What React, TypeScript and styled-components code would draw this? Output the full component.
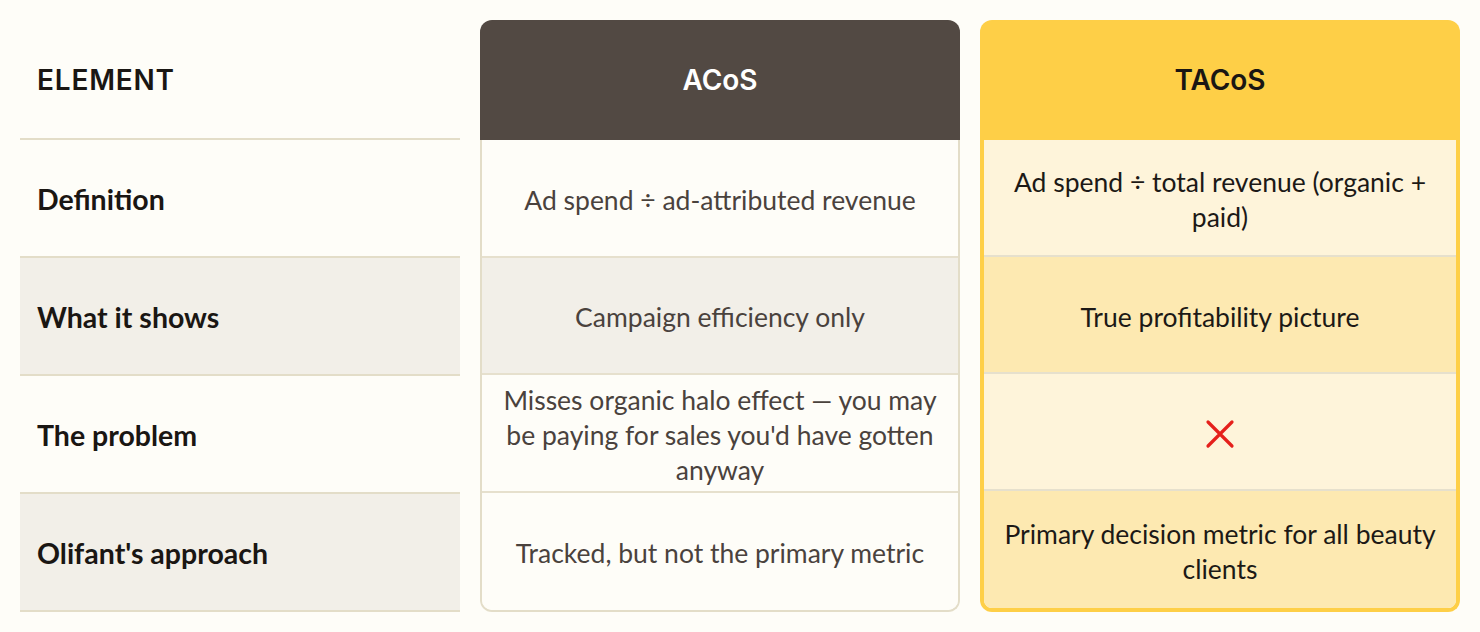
import React from 'react';
import styled, { createGlobalStyle } from 'styled-components';

const GlobalStyle = createGlobalStyle`
  * { box-sizing: border-box; }
  body {
    margin: 0;
    background: #fefdf8;
    font-family: Lato, "Noto Sans", sans-serif;
  }
`;

const Table = styled.div`
  display: grid;
  grid-template-columns: 440px 480px 480px;
  column-gap: 20px;
  padding: 20px;
  width: 1480px;
`;

const LabelColumn = styled.div`
  display: grid;
  grid-template-rows: 120px repeat(4, 118px);
`;

const LabelHead = styled.div`
  display: flex;
  align-items: center;
  padding: 2px 0 0 17px;
  border-bottom: 2px solid #e3ddc8;
  font-family: Inter, "Liberation Sans", sans-serif;
  font-weight: 600;
  font-size: 28px;
  letter-spacing: 0.8px;
  color: #1a1613;
`;

const LabelCell = styled.div<{ $shade: boolean }>`
  display: flex;
  align-items: center;
  padding: 2px 0 0 17px;
  border-bottom: 2px solid #e3ddc8;
  background: ${({ $shade }) => ($shade ? '#f2efe8' : 'transparent')};
  font-weight: 700;
  font-size: 28.5px;
  color: #1a1613;
`;

const Card = styled.div`
  display: grid;
  grid-template-rows: 120px 1fr;
`;

const CardHead = styled.div<{ $featured: boolean }>`
  display: flex;
  align-items: center;
  justify-content: center;
  border-radius: 12px 12px 0 0;
  background: ${({ $featured }) => ($featured ? '#fecf47' : '#524943')};
  color: ${({ $featured }) => ($featured ? '#1a1613' : '#ffffff')};
  font-family: Inter, "Liberation Sans", sans-serif;
  font-weight: 600;
  font-size: 28px;
`;

const CardBody = styled.div<{ $featured: boolean }>`
  display: grid;
  grid-template-rows: repeat(4, 1fr);
  border: ${({ $featured }) => ($featured ? '4px solid #fecf47' : '2px solid #e3ddc8')};
  border-top: none;
  border-radius: 0 0 12px 12px;
  overflow: hidden;
`;

const Cell = styled.div<{ $featured: boolean; $shade: boolean; $last: boolean }>`
  display: flex;
  align-items: center;
  justify-content: center;
  text-align: center;
  padding: 5px 14px 0;
  line-height: 35px;
  font-size: 26.5px;
  border-bottom: ${({ $last }) => ($last ? 'none' : '2px solid #e6e0cd')};
  color: ${({ $featured }) => ($featured ? '#1c1916' : '#4a423d')};
  background: ${({ $featured, $shade }) =>
    $featured ? ($shade ? '#fde9b1' : '#fef4da') : $shade ? '#f2efe8' : '#fefdf8'};
`;

const Cross = styled.svg`
  width: 30px;
  height: 30px;
`;

const rows = [
  {
    label: 'Definition',
    acos: 'Ad spend ÷ ad-attributed revenue',
    tacos: 'Ad spend ÷ total revenue (organic + paid)',
    acosShade: false,
  },
  {
    label: 'What it shows',
    acos: 'Campaign efficiency only',
    tacos: 'True profitability picture',
    acosShade: true,
  },
  {
    label: 'The problem',
    acos: "Misses organic halo effect — you may be paying for sales you'd have gotten anyway",
    tacos: null,
    acosShade: false,
  },
  {
    label: "Olifant's approach",
    acos: 'Tracked, but not the primary metric',
    tacos: 'Primary decision metric for all beauty clients',
    acosShade: false,
  },
];

function CrossIcon(): JSX.Element {
  return (
    <Cross viewBox="0 0 30 30">
      <path
        d="M3 3 L27 27 M27 3 L3 27"
        stroke="#e5201b"
        strokeWidth="3.2"
        strokeLinecap="round"
        fill="none"
      />
    </Cross>
  );
}

export default function App(): JSX.Element {
  return (
    <>
      <GlobalStyle />
      <Table>
        <LabelColumn>
          <LabelHead>ELEMENT</LabelHead>
          {rows.map((row, i) => (
            <LabelCell key={row.label} $shade={i % 2 === 1}>
              {row.label}
            </LabelCell>
          ))}
        </LabelColumn>

        <Card>
          <CardHead $featured={false}>ACoS</CardHead>
          <CardBody $featured={false}>
            {rows.map((row, i) => (
              <Cell key={row.label} $featured={false} $shade={row.acosShade} $last={i === rows.length - 1}>
                {row.acos}
              </Cell>
            ))}
          </CardBody>
        </Card>

        <Card>
          <CardHead $featured>TACoS</CardHead>
          <CardBody $featured>
            {rows.map((row, i) => (
              <Cell key={row.label} $featured $shade={i % 2 === 1} $last={i === rows.length - 1}>
                {row.tacos ?? <CrossIcon />}
              </Cell>
            ))}
          </CardBody>
        </Card>
      </Table>
    </>
  );
}
